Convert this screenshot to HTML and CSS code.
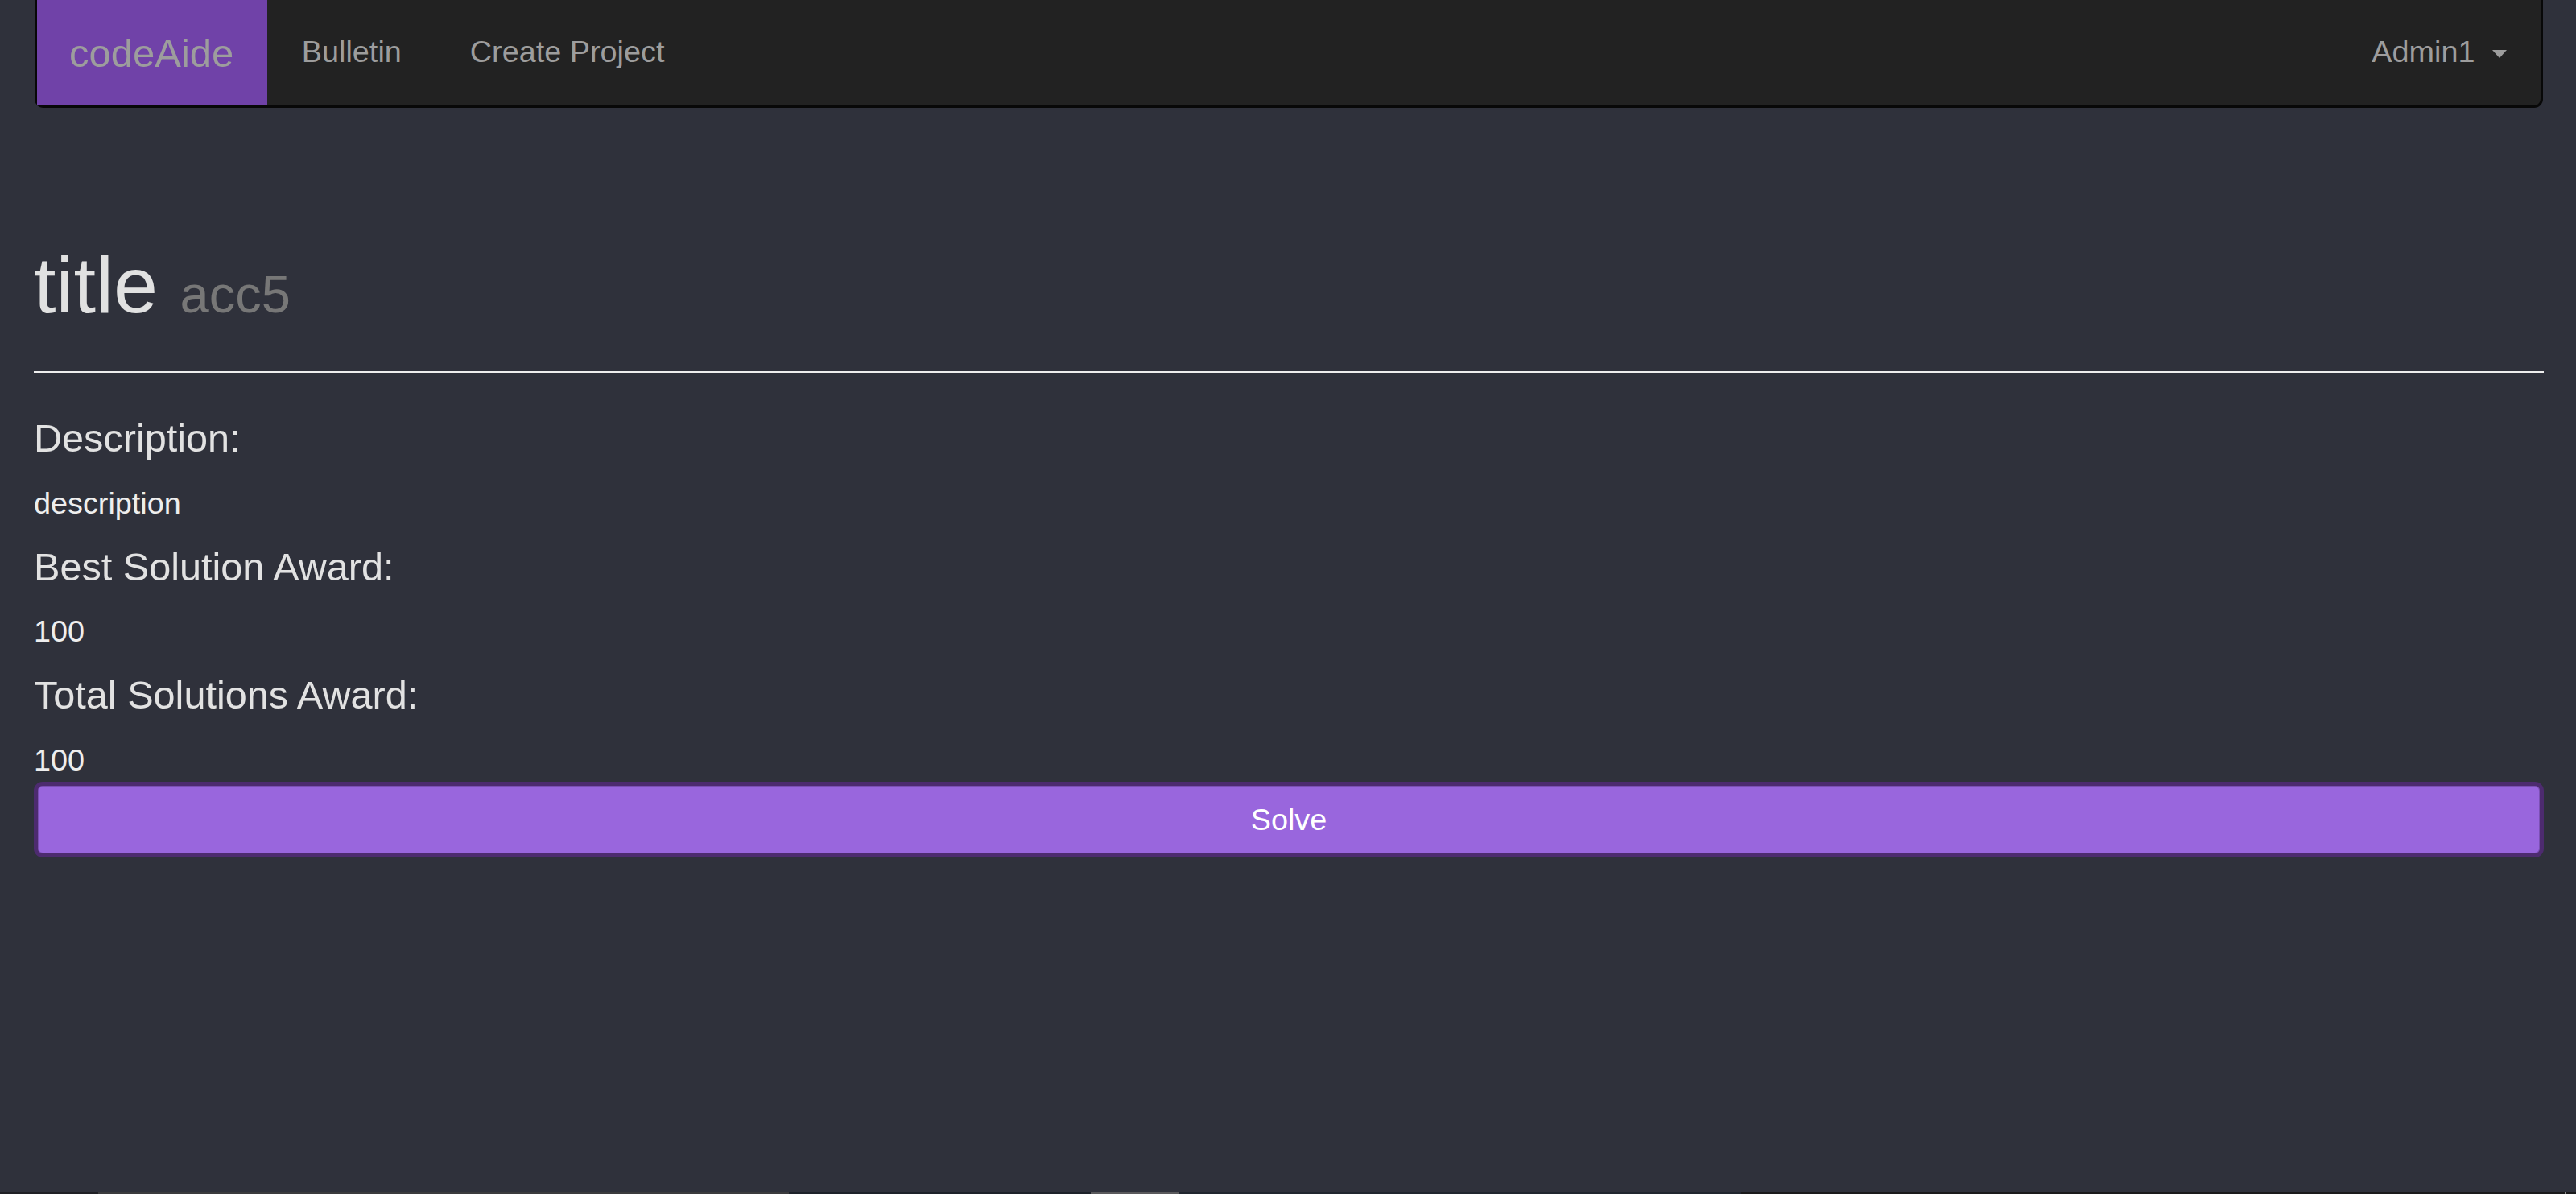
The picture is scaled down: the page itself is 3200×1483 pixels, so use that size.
FILE: index.html
```html
<!DOCTYPE html>
<html lang="en">
<head>
<meta charset="utf-8">
<title>codeAide</title>
<link rel="stylesheet" href="styles.css">
</head>
<body>
<div class="page">
  <div class="container">
    <nav class="navbar">
      <a class="brand" href="#">codeAide</a>
      <ul class="nav">
        <li><a href="#">Bulletin</a></li>
        <li><a href="#">Create Project</a></li>
      </ul>
      <ul class="nav nav-right">
        <li><a href="#">Admin1<span class="caret"></span></a></li>
      </ul>
    </nav>

    <div class="page-header">
      <h1>title <small>acc5</small></h1>
    </div>

    <h4>Description:</h4>
    <div class="value">description</div>
    <h4>Best Solution Award:</h4>
    <div class="value">100</div>
    <h4>Total Solutions Award:</h4>
    <div class="value">100</div>
    <button class="btn-solve" type="button">Solve</button>
  </div>
  <div class="statusbar"></div>
</div>
</body>
</html>
```

FILE: styles.css
```css
* {
  box-sizing: border-box;
}

html, body {
  margin: 0;
  padding: 0;
}

body {
  background: #2f313b;
  font-family: "Liberation Sans", Arial, Helvetica, sans-serif;
  color: #ececec;
}

.page {
  display: flex;
  flex-direction: column;
  min-height: 100vh;
}

.container {
  flex: 1;
  padding: 0 40px 0 42px;
}

/* Navbar */
.navbar {
  display: flex;
  align-items: stretch;
  height: 134px;
  margin: 0 1px;
  background: #222222;
  border: 3px solid #080808;
  border-top: 0;
  border-radius: 0 0 11px 11px;
}

.brand {
  display: block;
  padding: 39px 42px 0 40px;
  font-size: 49px;
  line-height: 54px;
  color: #9d9d9d;
  background: #7042a8;
  text-decoration: none;
}

.nav {
  display: flex;
  list-style: none;
  margin: 0;
  padding: 0;
}

.nav a {
  display: block;
  padding: 37px 42.5px 0;
  font-size: 37.8px;
  line-height: 54px;
  color: #9d9d9d;
  text-decoration: none;
}

.nav-right {
  margin-left: auto;
}

.caret {
  display: inline-block;
  width: 0;
  height: 0;
  margin-left: 21px;
  vertical-align: middle;
  border-top: 10px solid #9d9d9d;
  border-left: 9px solid transparent;
  border-right: 9px solid transparent;
}

/* Header */
.page-header {
  margin: 166px 0 55px;
  padding-bottom: 27px;
  border-bottom: 2px solid #eeeeee;
}

h1 {
  margin: 0 0 27px;
  font-size: 99px;
  line-height: 107px;
  font-weight: 400;
  color: #e1e1e1;
}

h1 small {
  font-size: 65px;
  line-height: 1;
  color: #777777;
}

h4 {
  margin: 26px 0;
  font-size: 48.6px;
  line-height: 53.5px;
  font-weight: 400;
  color: #e2e2e2;
}

.value {
  font-size: 37.8px;
  line-height: 54px;
  color: #eeeeee;
}

.btn-solve {
  display: block;
  width: 100%;
  margin: 0;
  padding: 15px;
  font-family: inherit;
  font-size: 37.8px;
  line-height: 54px;
  color: #ffffff;
  background: #9966dd;
  border: 5px solid #4d2b6f;
  border-radius: 11px;
  box-shadow: inset 0 0 0 1px #7b50b3;
  text-align: center;
  cursor: pointer;
}

.statusbar {
  height: 3px;
  background: linear-gradient(to right,
    #1f2024 0, #1f2024 122px,
    #3b3b3d 122px, #3b3b3d 980px,
    #1d2229 980px, #1d2229 1355px,
    #5a5a5c 1355px, #5a5a5c 1465px,
    #20262e 1465px, #20262e 2163px,
    #1a1a1b 2163px, #1a1a1b 3186px,
    #8a8a8a 3186px, #8a8a8a 3188px,
    #1a1a1b 3188px);
}
```
